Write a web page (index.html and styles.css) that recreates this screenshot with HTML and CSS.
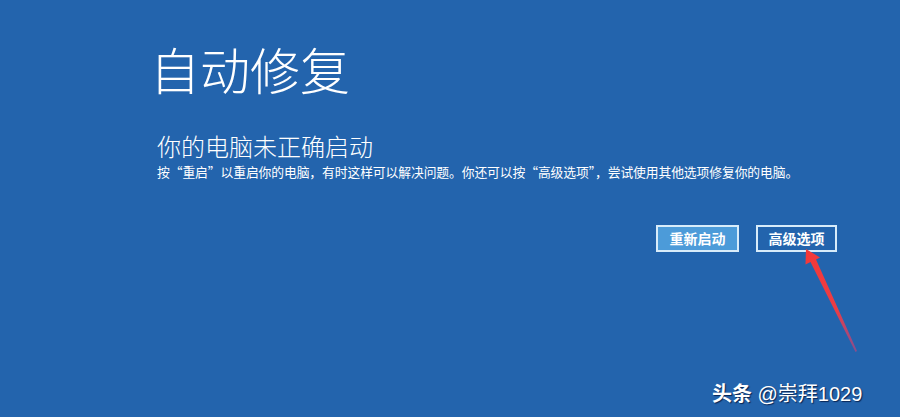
FILE: index.html
```html
<!DOCTYPE html>
<html lang="zh-CN">
<head>
<meta charset="utf-8">
<title>自动修复</title>
<link rel="stylesheet" href="styles.css">
</head>
<body>
<div class="screen">
  <div class="content">
    <h1 class="title">自动修复</h1>
    <h2 class="subtitle">你的电脑未正确启动</h2>
    <p class="desc">按“重启”以重启你的电脑，有时这样可以解决问题。你还可以按“高级选项”，尝试使用其他选项修复你的电脑。</p>
    <div class="actions">
      <button class="btn btn-primary">重新启动</button>
      <button class="btn btn-outline">高级选项</button>
    </div>
  </div>
  <svg class="arrow" width="70" height="120" viewBox="0 0 70 120">
    <defs>
      <linearGradient id="ag" x1="0" y1="0" x2="1" y2="1">
        <stop offset="0" stop-color="#f53838"/>
        <stop offset="0.6" stop-color="#ec3d45"/>
        <stop offset="1" stop-color="#c8407a" stop-opacity="0.6"/>
      </linearGradient>
    </defs>
    <path d="M6 9 L20 17.5 L16 19.5 L57 111 L55.5 112 L10.5 22 L5.5 24.5 Z" fill="url(#ag)"/>
  </svg>
  <div class="watermark"><b>头条</b> @崇拜1029</div>
</div>
</body>
</html>
```
FILE: styles.css
```css
* { box-sizing: border-box; }
html, body { margin: 0; padding: 0; }
body {
  width: 900px;
  height: 417px;
  overflow: hidden;
  background: #2364ad;
  font-family: "Noto Sans CJK SC", "Microsoft YaHei", sans-serif;
  color: #fff;
}
.screen {
  position: relative;
  width: 900px;
  height: 417px;
}
.content {
  padding: 37px 0 0 150px;
}
.title {
  margin: 0;
  font-size: 50px;
  font-weight: 300;
  line-height: 62px;
}
.subtitle {
  margin: 33px 0 0 7px;
  font-size: 24px;
  font-weight: 300;
  line-height: 28px;
}
.desc {
  margin: 3px 0 0 7px;
  font-size: 12.8px;
  line-height: 18px;
  letter-spacing: -0.1px;
}
.actions {
  display: flex;
  gap: 17px;
  margin: 44px 0 0 506px;
}
.btn {
  height: 27px;
  padding: 0;
  font-family: inherit;
  font-size: 14px;
  font-weight: 700;
  color: #fff;
  border: 2px solid #d8ecfa;
  line-height: 21px;
  white-space: nowrap;
  text-align: center;
}
.btn-primary {
  width: 83px;
  background: #4c9bd9;
}
.btn-outline {
  width: 81px;
  background: #2364ad;
}
.arrow {
  position: absolute;
  left: 800px;
  top: 240px;
}
.watermark {
  position: absolute;
  left: 712px;
  top: 380px;
  font-family: "Liberation Sans", "Noto Sans CJK SC", sans-serif;
  font-size: 20px;
  line-height: 28px;
  text-shadow: 1px 1px 1px rgba(0, 20, 60, 0.8);
}
.watermark b { font-weight: 700; }
```
